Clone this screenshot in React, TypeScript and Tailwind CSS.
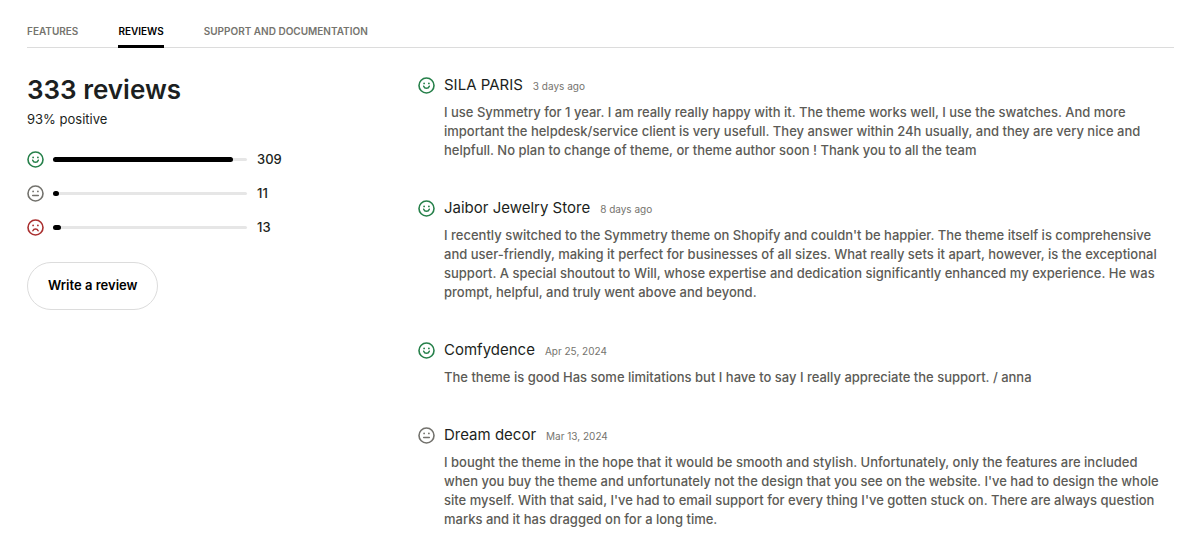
import React from 'react'
import clsx from 'clsx'

type Rating = 'positive' | 'neutral' | 'negative'

interface Review {
  author: string
  date: string
  rating: Rating
  body: string
}

const tabs = ['Features', 'Reviews', 'Support and documentation']

const breakdown: { rating: Rating; count: number }[] = [
  { rating: 'positive', count: 309 },
  { rating: 'neutral', count: 11 },
  { rating: 'negative', count: 13 }
]

const reviews: Review[] = [
  {
    author: 'SILA PARIS',
    date: '3 days ago',
    rating: 'positive',
    body: 'I use Symmetry for 1 year. I am really really happy with it. The theme works well, I use the swatches. And more important the helpdesk/service client is very usefull. They answer within 24h usually, and they are very nice and helpfull. No plan to change of theme, or theme author soon ! Thank you to all the team'
  },
  {
    author: 'Jaibor Jewelry Store',
    date: '8 days ago',
    rating: 'positive',
    body: "I recently switched to the Symmetry theme on Shopify and couldn't be happier. The theme itself is comprehensive and user-friendly, making it perfect for businesses of all sizes. What really sets it apart, however, is the exceptional support. A special shoutout to Will, whose expertise and dedication significantly enhanced my experience. He was prompt, helpful, and truly went above and beyond."
  },
  {
    author: 'Comfydence',
    date: 'Apr 25, 2024',
    rating: 'positive',
    body: 'The theme is good Has some limitations but I have to say I really appreciate the support. / anna'
  },
  {
    author: 'Dream decor',
    date: 'Mar 13, 2024',
    rating: 'neutral',
    body: "I bought the theme in the hope that it would be smooth and stylish. Unfortunately, only the features are included when you buy the theme and unfortunately not the design that you see on the website. I've had to design the whole site myself. With that said, I've had to email support for every thing I've gotten stuck on. There are always question marks and it has dragged on for a long time."
  }
]

const faceColors: Record<Rating, string> = {
  positive: 'text-[#26804a]',
  neutral: 'text-[#73726d]',
  negative: 'text-[#aa3030]'
}

const mouths: Record<Rating, string> = {
  positive: 'M5.7 9.2c.5 1.4 1.5 2 2.8 2s2.3-.6 2.8-2',
  neutral: 'M5.7 10.5h5.6',
  negative: 'M5.9 11.7c.5-1.1 1.4-1.6 2.6-1.6s2.1.5 2.6 1.6'
}

const Face: React.FC<{ rating: Rating }> = ({ rating }) => (
  <svg
    viewBox="0 0 17 17"
    fill="none"
    stroke="currentColor"
    role="img"
    aria-label={rating}
    className={clsx('size-[17px] shrink-0', faceColors[rating])}
  >
    <circle cx="8.5" cy="8.5" r="7.5" strokeWidth="1.6" />
    <path d={mouths[rating]} strokeWidth="1.5" strokeLinecap="round" />
    <circle cx="6.1" cy="6.4" r=".9" fill="currentColor" stroke="none" />
    <circle cx="10.9" cy="6.4" r=".9" fill="currentColor" stroke="none" />
  </svg>
)

const App: React.FC = () => {
  const total = breakdown.reduce((sum, item) => sum + item.count, 0)

  return (
    <main className="bg-white pt-[21px] pr-[26px] pl-[27px] font-['Inter',sans-serif] text-[#1c1f21]">
      <nav className="flex gap-10 border-b border-[#dcdcdc]">
        {tabs.map((tab) => (
          <a
            key={tab}
            href="#"
            aria-current={tab === 'Reviews' ? 'page' : undefined}
            className={clsx(
              '-mb-px border-b-3 pt-1 pb-2 text-[10px] leading-3 font-semibold uppercase',
              tab === 'Reviews' ? 'border-black text-black' : 'border-transparent text-[#75746e]'
            )}
          >
            {tab}
          </a>
        ))}
      </nav>

      <div className="grid grid-cols-3 gap-[26px] pt-[25px]">
        <section>
          <h2 className="pt-px text-[26px] leading-8 font-semibold">{total} reviews</h2>
          <p className="mt-[3px] text-[13px] leading-5">93% positive</p>

          <ul className="mt-5 flex flex-col gap-[14px]">
            {breakdown.map(({ rating, count }) => (
              <li key={rating} className="flex items-center text-[13px] leading-5 font-medium">
                <Face rating={rating} />
                <div className="ml-[9px] flex h-[3px] w-[194px] items-center rounded-full bg-[#e6e6e6]">
                  <div
                    className="h-[5px] shrink-0 rounded-full bg-black"
                    style={{ width: `${(count / total) * 100}%` }}
                  />
                </div>
                <span className="ml-[10px]">{count}</span>
              </li>
            ))}
          </ul>

          <button
            type="button"
            className="mt-[25px] h-12 rounded-full border border-[#dcdcdc] px-5 text-[13px] font-semibold text-black"
          >
            Write a review
          </button>
        </section>

        <section className="col-span-2 flex flex-col gap-9">
          {reviews.map((review) => (
            <article key={review.author} className="flex gap-[9px]">
              <div className="flex h-6 items-center">
                <Face rating={review.rating} />
              </div>
              <div>
                <header className="flex h-6 items-baseline gap-[10px] leading-6">
                  <h3 className="text-[15px]">{review.author}</h3>
                  <time className="text-[10px] text-[#75746e]">{review.date}</time>
                </header>
                <p className="mt-[6px] text-[13px] leading-[19px] font-medium text-[#5c5b56]">{review.body}</p>
              </div>
            </article>
          ))}
        </section>
      </div>
    </main>
  )
}

export default App
